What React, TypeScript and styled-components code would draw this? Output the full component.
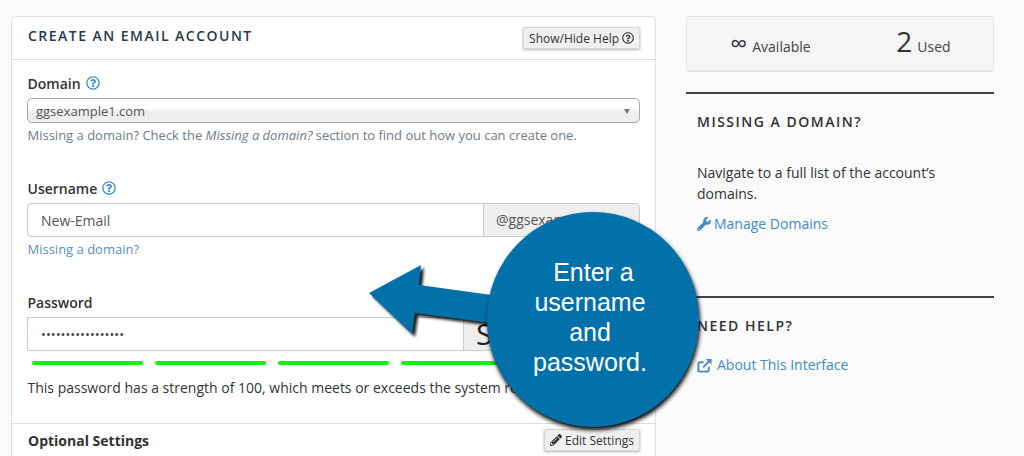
import React from "react";
import styled, { createGlobalStyle } from "styled-components";
import { FaRegQuestionCircle, FaWrench, FaPencilAlt } from "react-icons/fa";

const Global = createGlobalStyle`
  html, body { margin: 0; padding: 0; height: 456px; overflow: hidden; background: #fafafa; }
  body { font-family: "Open Sans", "Liberation Sans", sans-serif; color: #333; font-size: 14px; }
  * { box-sizing: border-box; }
`;

const Page = styled.div`
  position: relative;
  width: 1024px;
  height: 456px;
  overflow: hidden;
  display: flex;
  gap: 30px;
  padding: 16px 30px 0 11px;
`;

const Card = styled.section`
  width: 645px;
  height: 520px;
  flex: none;
  background: #fff;
  border: 1px solid #e1e1e1;
  border-radius: 4px;
`;

const CardHeader = styled.header`
  height: 43px;
  padding: 0 15px 0 16px;
  border-bottom: 1px solid #dedede;
  display: flex;
  justify-content: space-between;
  align-items: flex-start;
`;

const CardTitle = styled.h2`
  margin: 9px 0 0;
  font-size: 14px;
  line-height: 19px;
  font-weight: 600;
  letter-spacing: 1.47px;
  color: #293a4a;
  text-transform: uppercase;
`;

const SmallButton = styled.button<{ $top: number }>`
  margin-top: ${(p) => p.$top}px;
  height: 22px;
  padding: 0 5px;
  display: inline-flex;
  align-items: center;
  gap: 3px;
  font-family: inherit;
  font-size: 12px;
  color: #333;
  background: #f0f0f0;
  border: 1px solid #d6d6d6;
  border-radius: 2px;
  box-shadow: 0 1px 3px rgba(0, 0, 0, 0.3);
  white-space: nowrap;
  svg { font-size: 12px; }
`;

const CardBody = styled.div`
  padding: 15px 15px 0 15px;
`;

const Field = styled.div<{ $height: number }>`
  height: ${(p) => p.$height}px;
`;

const Label = styled.label`
  display: flex;
  align-items: center;
  gap: 5px;
  height: 18px;
  margin-bottom: 5px;
  padding: 0 0 2px 0.5px;
  font-size: 14px;
  font-weight: 600;
  color: #333;
  svg { color: #3d8ccf; font-size: 14px; }
`;

const SelectBox = styled.div`
  position: relative;
  height: 25px;
  border: 1px solid #a9a9a9;
  border-radius: 5px;
  padding: 0 8px;
  font-size: 13px;
  line-height: 24px;
  color: #555;
  background: linear-gradient(#fff 0%, #fff 40%, #eeeeee 55%, #eeeeee 100%);
`;

const Caret = styled.span`
  position: absolute;
  right: 9px;
  top: 10px;
  border-left: 3px solid transparent;
  border-right: 3px solid transparent;
  border-top: 5px solid #777;
`;

const Hint = styled.p`
  margin: 3px 0 0;
  padding-left: 0.5px;
  font-size: 13px;
  line-height: 18px;
  color: #6e7b88;
`;

const HintLink = styled.a`
  display: block;
  margin-top: 3px;
  padding-left: 0.5px;
  font-size: 13px;
  line-height: 18px;
  color: #5b8fc2;
`;

const InputGroup = styled.div<{ $radius: number }>`
  display: flex;
  height: 34px;
  border: 1px solid #cbcbcb;
  border-radius: ${(p) => p.$radius}px;
  overflow: hidden;
  background: #fff;
`;

const TextInput = styled.input`
  flex: 1;
  min-width: 0;
  border: none;
  outline: none;
  padding: 0 13px;
  font-family: inherit;
  font-size: 14px;
  color: #555;
  background: transparent;
`;

const PasswordInput = styled(TextInput)`
  font-size: 13px;
  color: #444;
`;

const Addon = styled.div<{ $width: number; $size: number; $color: string }>`
  width: ${(p) => p.$width}px;
  flex: none;
  border-left: 1px solid #cbcbcb;
  background: #eee;
  padding-left: 12px;
  font-size: ${(p) => p.$size}px;
  line-height: 32px;
  color: ${(p) => p.$color};
  white-space: nowrap;
`;

const Meter = styled.div`
  display: flex;
  gap: 12px;
  padding: 0 5px;
  margin-top: 10px;
`;

const MeterBar = styled.span`
  width: 111px;
  height: 4px;
  border-radius: 2px;
  background: #06fb06;
`;

const Strength = styled.p`
  margin: 13px 0 0;
  padding-left: 0.5px;
  font-size: 14px;
  line-height: 20px;
  color: #333;
  white-space: nowrap;
`;

const OptionalRow = styled.div`
  margin-top: 8px;
  border-top: 1px solid #dedede;
  padding: 5px 15px 0 16px;
  display: flex;
  justify-content: space-between;
  align-items: flex-start;
`;

const OptionalTitle = styled.h3`
  margin: 2px 0 0;
  font-size: 14px;
  line-height: 19px;
  font-weight: 700;
  color: #333;
`;

const Side = styled.aside`
  width: 308px;
  flex: none;
`;

const Stats = styled.div`
  height: 56px;
  display: flex;
  gap: 14px;
  padding-left: 14px;
  background: #f5f5f5;
  border: 1px solid #e3e3e3;
  border-bottom-width: 2px;
  border-radius: 4px;
`;

const Stat = styled.div`
  flex: 1;
  display: flex;
  justify-content: center;
  align-items: baseline;
  gap: 5px;
  line-height: 52px;
  font-size: 14px;
  color: #444;
`;

const StatValue = styled.span<{ $size: number; $lineHeight: number }>`
  font-size: ${(p) => p.$size}px;
  line-height: ${(p) => p.$lineHeight}px;
  color: #333;
`;

const SideSection = styled.div<{ $top: number; $height: number }>`
  margin-top: ${(p) => p.$top}px;
  height: ${(p) => p.$height}px;
  border-top: 2px solid #444;
  padding: 19px 10px 0 11px;
`;

const SideHeading = styled.h3`
  margin: 0;
  font-size: 14px;
  line-height: 18px;
  font-weight: 600;
  letter-spacing: 1.5px;
  color: #333;
  text-transform: uppercase;
`;

const SideText = styled.p`
  margin: 31px 0 0;
  font-size: 14px;
  line-height: 21px;
  color: #333;
`;

const SideLink = styled.a<{ $top: number; $gap: number }>`
  display: flex;
  align-items: center;
  gap: ${(p) => p.$gap}px;
  margin-top: ${(p) => p.$top}px;
  font-size: 14px;
  line-height: 20px;
  color: #428bca;
  svg { font-size: 14px; flex: none; }
`;

const ArrowDrawing = styled.svg`
  position: absolute;
  left: 359px;
  top: 255px;
  overflow: visible;
  filter: drop-shadow(3px 3px 1.5px rgba(0, 0, 0, 0.9));
`;

const Bubble = styled.div`
  position: absolute;
  left: 487px;
  top: 212px;
  width: 212px;
  height: 215px;
  border-radius: 50%;
  background: #0271aa;
  box-shadow: 1px 3px 4px rgba(0, 0, 0, 1);
  display: flex;
  align-items: center;
  justify-content: center;
  text-align: center;
  color: #fff;
  font-family: "Liberation Sans", Arial, sans-serif;
  font-size: 25px;
  line-height: 30px;
  padding: 0 42px 6px 36px;
`;

function ExternalLinkIcon() {
  return (
    <svg width="15" height="15" viewBox="0 0 16 16" fill="none" stroke="currentColor" strokeWidth="2">
      <path d="M12.5 9.5V13a1.5 1.5 0 0 1-1.5 1.5H3A1.5 1.5 0 0 1 1.5 13V6A1.5 1.5 0 0 1 3 4.5h4" />
      <path d="M6.5 10L13 3.5" />
      <path d="M9.5 1H15.5V7Z" fill="currentColor" stroke="none" />
    </svg>
  );
}

export default function App() {
  return (
    <>
      <Global />
      <Page>
        <Card>
          <CardHeader>
            <CardTitle>Create an Email Account</CardTitle>
            <SmallButton $top={10}>
              Show/Hide Help <FaRegQuestionCircle />
            </SmallButton>
          </CardHeader>
          <CardBody>
            <Field $height={105}>
              <Label>
                Domain <FaRegQuestionCircle />
              </Label>
              <SelectBox>
                ggsexample1.com
                <Caret />
              </SelectBox>
              <Hint>
                Missing a domain? Check the <em>Missing a domain?</em> section to find out how you can create one.
              </Hint>
            </Field>
            <Field $height={114}>
              <Label>
                Username <FaRegQuestionCircle />
              </Label>
              <InputGroup $radius={4}>
                <TextInput defaultValue="New-Email" readOnly />
                <Addon $width={156} $size={14} $color="#555">@ggsexample1.com</Addon>
              </InputGroup>
              <HintLink>Missing a domain?</HintLink>
            </Field>
            <Field $height={121}>
              <Label>Password</Label>
              <InputGroup $radius={0}>
                <PasswordInput type="password" defaultValue="abcdefghijklmnopq" readOnly />
                <Addon $width={176} $size={30} $color="#222">Strong</Addon>
              </InputGroup>
              <Meter>
                <MeterBar />
                <MeterBar />
                <MeterBar />
                <MeterBar />
                <MeterBar />
              </Meter>
              <Strength>This password has a strength of 100, which meets or exceeds the system requirement.</Strength>
            </Field>
          </CardBody>
          <OptionalRow>
            <OptionalTitle>Optional Settings</OptionalTitle>
            <SmallButton $top={0}>
              <FaPencilAlt /> Edit Settings
            </SmallButton>
          </OptionalRow>
        </Card>
        <Side>
          <Stats>
            <Stat>
              <StatValue $size={24} $lineHeight={52}>∞</StatValue> Available
            </Stat>
            <Stat>
              <StatValue $size={28} $lineHeight={49}>2</StatValue> Used
            </Stat>
          </Stats>
          <SideSection $top={20} $height={204}>
            <SideHeading>Missing a Domain?</SideHeading>
            <SideText>Navigate to a full list of the account’s domains.</SideText>
            <SideLink $top={10} $gap={3}>
              <FaWrench /> Manage Domains
            </SideLink>
          </SideSection>
          <SideSection $top={0} $height={120}>
            <SideHeading>Need Help?</SideHeading>
            <SideLink $top={20} $gap={5}>
              <ExternalLinkIcon /> About This Interface
            </SideLink>
          </SideSection>
        </Side>
        <ArrowDrawing width="140" height="90" viewBox="0 0 140 90">
          <path d="M10 38 L62 10 L60 30 L140 41 L140 69 L56 58 L53 79 Z" fill="#0271aa" />
        </ArrowDrawing>
        <Bubble>{"\u00a0Enter a username and password."}</Bubble>
      </Page>
    </>
  );
}
